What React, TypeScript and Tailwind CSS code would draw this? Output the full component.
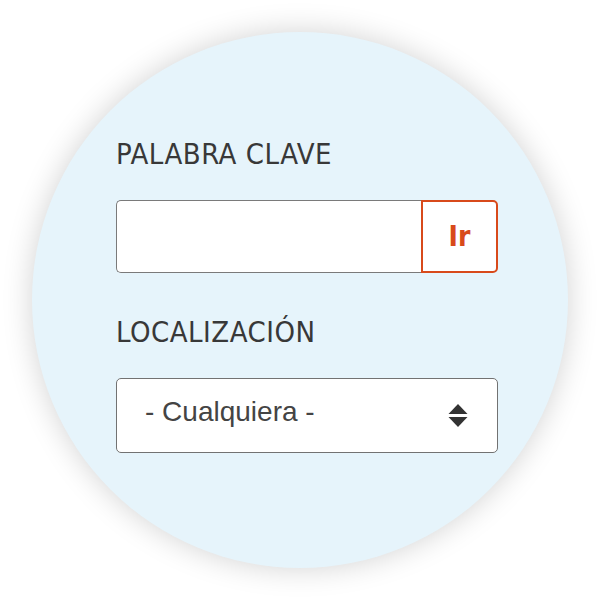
import { useState } from "react";

const labelFont = { fontFamily: '"DejaVu Sans Condensed", "DejaVu Sans", sans-serif' };

function SortArrows() {
  return (
    <svg width="20" height="23" viewBox="0 0 20 23" className="shrink-0">
      <path d="M10 0 L19.5 10 L0.5 10 Z" fill="#333" />
      <path d="M0.5 13 L19.5 13 L10 23 Z" fill="#333" />
    </svg>
  );
}

export default function App() {
  const [keyword, setKeyword] = useState("");

  return (
    <main className="w-[600px] h-[600px] bg-white flex items-center justify-center">
      {/* Circle panel */}
      <div className="w-[536px] h-[536px] rounded-full bg-[#e6f4fb] shadow-[0_0_30px_rgba(0,0,0,0.18)] flex flex-col pt-[108px] pl-[84px]">
        <div className="w-[382px] flex flex-col">
          <p
            className="text-[29px] leading-[29px] text-[#383838] tracking-[0.5px]"
            style={labelFont}
          >
            PALABRA CLAVE
          </p>

          <div className="mt-[31px] flex flex-row h-[73px]">
            <input
              value={keyword}
              onChange={(e) => setKeyword(e.target.value)}
              className="flex-1 min-w-0 bg-white border border-[#7a7a7a] border-r-0 rounded-l-[5px] outline-none px-4 text-[24px]"
            />
            <button
              className="w-[77px] h-full bg-white border-2 border-[#d84a1b] rounded-r-[5px] text-[#d84a1b] text-[28px] leading-none font-bold flex items-center justify-center"
              style={labelFont}
            >
              Ir
            </button>
          </div>

          <p
            className="mt-[45px] text-[29px] leading-[29px] text-[#383838] tracking-[0.5px]"
            style={labelFont}
          >
            LOCALIZACIÓN
          </p>

          <div className="mt-[31px] h-[75px] bg-white border border-[#727272] rounded-[5px] flex flex-row items-center justify-between pl-[28px] pr-[29px]">
            <span
              className="text-[28px] leading-none text-[#444] pb-[7px]"
              style={{ fontFamily: '"Liberation Sans", Arial, sans-serif' }}
            >
              - Cualquiera -
            </span>
            <SortArrows />
          </div>
        </div>
      </div>
    </main>
  );
}
